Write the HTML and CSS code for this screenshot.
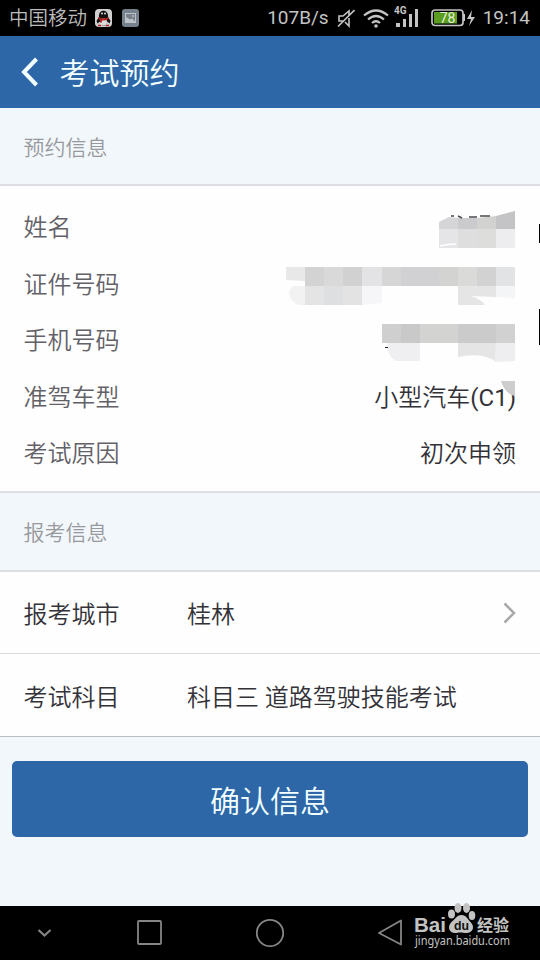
FILE: index.html
```
<!DOCTYPE html>
<html lang="zh-CN">
<head>
  <meta charset="UTF-8">
  <meta name="viewport" content="width=device-width, initial-scale=1.0">
  <title>考试预约</title>
  <link rel="stylesheet" href="styles.css">
</head>
<body>

<div class="status-bar">
  <span class="carrier">中国移动</span>
  <svg class="icon-qq" width="17" height="18" viewBox="0 0 17 18">
    <rect width="17" height="18" rx="4" fill="#d0d0d0"/>
    <path d="M4 8C3-.5 14-.5 13 8l2.500 4-1 2.500-2-2-2 4H7l-2-4-2.500 2-1-2.500z" fill="#141010"/>
    <ellipse cx="8.5" cy="13" rx="3.5" ry="3.5" fill="#ddd"/>
    <path d="M3.5 8q5 3 10 0v2q-5 3-10 0zM5 10h2v3.500H5z" fill="#b92320"/>
    <circle cx="7" cy="4.5" r="1" fill="#ddd"/>
    <circle cx="10" cy="4.5" r="1" fill="#ddd"/>
    <path d="M3 16.500h3M11 16.500h3" stroke="#b92320" stroke-width="1.500"/>
  </svg>
  <svg class="icon-picture" width="17" height="18" viewBox="0 0 17 18">
    <rect width="17" height="18" rx="3" fill="#76818b"/>
    <rect x="3.5" y="4.5" width="10" height="9" fill="none" stroke="#bcc2c7"/>
    <path d="M4 8l4 2.500 2-1 3 3v1H4z" fill="#bcc2c7"/>
    <circle cx="11" cy="7" r="1" fill="#bcc2c7"/>
  </svg>
  <div class="status-right">
    <span class="speed">107B/s</span>
    <svg class="icon-mute" width="18" height="19" viewBox="0 0 18 19" fill="none" stroke="#c4c4c4" stroke-width="1.6">
      <path d="M7 12H2V7h4l6-5v4M12 9v8l-4-4M1 17.500L17.500 1"/>
    </svg>
    <svg class="icon-wifi" width="26" height="19" viewBox="0 0 26 19" fill="none" stroke="#c4c4c4" stroke-width="2.200">
      <path d="M1 6.500q12-10 24 0M5 10.500q8-7 16 0M9 14q4-3.500 8 0"/>
      <circle cx="13" cy="17" r="1.800" fill="#c4c4c4" stroke="none"/>
    </svg>
    <svg class="icon-signal" width="25" height="24" viewBox="0 0 25 24" fill="#c4c4c4">
      <text x="0" y="9" class="net-type">4G</text>
      <rect x="2" y="18" width="4" height="4"/>
      <rect x="9" y="14" width="3" height="8"/>
      <rect x="15" y="9" width="3" height="13"/>
      <rect x="21" y="4" width="3" height="18"/>
    </svg>
    <svg class="icon-battery" width="44" height="18" viewBox="0 0 44 18">
      <rect x="1" y="1" width="31" height="15.500" rx="3" fill="none" stroke="#c4c4c4" stroke-width="1.700"/>
      <rect x="3" y="3" width="23" height="11.500" fill="#5a9d21"/>
      <path d="M33 5v7" stroke="#c4c4c4" stroke-width="2"/>
      <text x="16.500" y="13.500" text-anchor="middle" class="battery-level">78</text>
      <path d="M41 1l-5 9h4l-2 7 6-9h-4z" fill="#c4c4c4"/>
    </svg>
    <span class="clock">19:14</span>
  </div>
</div>

<header class="title-bar">
  <svg class="back" width="18" height="30" viewBox="0 0 18 30">
    <path d="M15.500 2L3 15l12.500 13" fill="none" stroke="#f3ffff" stroke-width="4"/>
  </svg>
  <h1>考试预约</h1>
</header>

<main>
  <h2 class="section-title">预约信息</h2>
  <div class="info">
    <div class="info-row"><span>姓名</span></div>
    <div class="info-row"><span>证件号码</span></div>
    <div class="info-row"><span>手机号码</span></div>
    <div class="info-row"><span>准驾车型</span><b>小型汽车<i>(C1)</i></b></div>
    <div class="info-row"><span>考试原因</span><b>初次申领</b></div>

    <!-- masked personal data -->
    <svg class="mask" width="540" height="305" viewBox="0 186 540 305">
      <path d="M439 222l10-5 9 1v11h-19z" fill="#d5d4d6"/>
      <path d="M458 218h19v11h-19z" fill="#cbcacc"/>
      <path d="M477 218l19-2v13h-19z" fill="#d2d2d1"/>
      <path d="M496 216l19-5v18h-19z" fill="#c4c3c6"/>
      <path d="M439 229h19v19h-19z" fill="#e5e4e6"/>
      <path d="M458 229h19v19h-19z" fill="#dededf"/>
      <path d="M477 229h19v19h-19z" fill="#dddddb"/>
      <path d="M496 229h19v19h-19z" fill="#ededef"/>
      <path d="M440 246q8-2 16-2" stroke="#fff" stroke-width="1.500" fill="none"/>
      <path d="M451 216h3M458 216l4 2M469 217h8M480 216h10" stroke="#4b4950" stroke-width="1.400"/>

      <path d="M286 267h19v14l-19-1z" fill="#e8e8e9"/>
      <path d="M305 267h19v19h-19z" fill="#d3d3d4"/>
      <path d="M324 267h19v19h-19z" fill="#d9d9da"/>
      <path d="M343 267h19v19h-19z" fill="#d1d1d1"/>
      <path d="M362 267h20v19h-20z" fill="#e3e3e5"/>
      <path d="M382 267h19v19h-19z" fill="#d6d6d7"/>
      <path d="M401 267h38v19h-38z" fill="#d1d0d2"/>
      <path d="M439 267h19v19h-19z" fill="#d3d3d1"/>
      <path d="M458 267h19v19h-19z" fill="#dadad9"/>
      <path d="M477 267h19v19h-19z" fill="#d2d2d2"/>
      <path d="M496 267h19v19h-19z" fill="#e2e3e4"/>
      <path d="M305 286v19h-7q-8-4-9-12 0-5 5-7z" fill="#f2f2f3"/>
      <path d="M305 286h19v19h-19z" fill="#e4e4e5"/>
      <path d="M324 286h19v19h-19z" fill="#dedfe0"/>
      <path d="M343 286h19v19h-19z" fill="#e3e3e3"/>
      <path d="M362 286h20v17l-20 2z" fill="#f6f6f8"/>
      <path d="M458 286h38v11l-26-1q10 2 15 9h-27z" fill="#e4e5e4"/>
      <path d="M496 286h19v12l-19-1z" fill="#f4f5f6"/>

      <path d="M382 324h19v19h-19z" fill="#cfcfcf"/>
      <path d="M401 324h19v19h-19z" fill="#c9c9c9"/>
      <path d="M420 324h38v19h-38z" fill="#d3d3d2"/>
      <path d="M458 324h38v19h-38z" fill="#cbcbcb"/>
      <path d="M496 324h19v19h-19z" fill="#d1d1d2"/>
      <path d="M388 343h32v18h-24q-7-4-9-13z" fill="#efeef0"/>
      <path d="M458 343h38v18q-16-9-38-4z" fill="#e5e5e6"/>
      <path d="M496 343h19v18l-21 1z" fill="#eeedef"/>
      <path d="M385 347.500h3" stroke="#222" stroke-width="1"/>
      <path d="M501 381h14v15q-10-2-14-15z" fill="#cdcdce"/>

      <path d="M539 224h1v19h-1zM539 309h1v36h-1z" fill="#000"/>
    </svg>
  </div>

  <h2 class="section-title second">报考信息</h2>
  <div class="choice city">
    <span class="choice-label">报考城市</span>
    <span>桂林</span>
    <svg class="arrow" width="13" height="22" viewBox="0 0 13 22">
      <path d="M1.500 1.500L11 11 1.500 20.500" fill="none" stroke="#a9a9ab" stroke-width="2.500"/>
    </svg>
  </div>
  <div class="choice subject">
    <span class="choice-label">考试科目</span>
    <span>科目三 道路驾驶技能考试</span>
  </div>

  <button class="confirm" type="button">确认信息</button>
</main>

<nav class="nav-bar">
  <svg width="540" height="54" viewBox="0 0 540 54" fill="none" stroke="#858585" stroke-width="1.800">
    <path d="M38.500 24l6 5.500 6-5.500" stroke-width="2.200"/>
    <rect x="138" y="15" width="23" height="23" rx="1"/>
    <circle cx="270" cy="27" r="13.200"/>
    <path d="M401 14.500v24L379 27z" stroke-linejoin="round"/>
  </svg>
</nav>

<svg class="watermark" width="110" height="58" viewBox="0 0 110 58" fill="#c3c3c3">
  <text x="3" y="31" class="wm-brand" textLength="32" lengthAdjust="spacingAndGlyphs">Bai</text>
  <ellipse cx="40.500" cy="13" rx="3.500" ry="4.500"/>
  <ellipse cx="47" cy="7" rx="3.500" ry="5"/>
  <ellipse cx="55.500" cy="7" rx="3.500" ry="5"/>
  <ellipse cx="61" cy="14.500" rx="3.300" ry="4.500"/>
  <path d="M50.500 14c5 0 6 4 9 7 5 5 2 11-4 11-4 0-6-1-10 0-7 1-10-6-5-11 4-3 5-7 10-7z"/>
  <text x="43" y="29" class="wm-du" textLength="15" lengthAdjust="spacingAndGlyphs">du</text>
  <text x="66" y="29.500" class="wm-cn" textLength="32" lengthAdjust="spacingAndGlyphs">经验</text>
  <text x="4" y="43.500" class="wm-url" textLength="95" lengthAdjust="spacingAndGlyphs">jingyan.baidu.com</text>
</svg>

</body>
</html>
```

FILE: styles.css
```
* {
  box-sizing: border-box;
}
body {
  margin: 0;
  width: 540px;
  height: 960px;
  display: flex;
  flex-direction: column;
  position: relative;
  overflow: hidden;
  background: #f2f7fb;
  color: #333238;
  font-family: Roboto, "Noto Sans CJK SC", sans-serif;
  font-weight: 350;
}
svg {
  flex: none;
  display: block;
}
.status-bar {
  height: 36px;
  padding: 0 10px 0 9px;
  display: flex;
  align-items: center;
  background: #000;
  color: #bcbcbc;
  font-size: 19.5px;
  line-height: 36px;
  white-space: nowrap;
}
.carrier {
  padding-top: 2px;
}
.icon-qq {
  margin-left: 8px;
}
.icon-picture {
  margin-left: 10px;
}
.status-right {
  margin-left: auto;
  display: flex;
  align-items: center;
  color: #c4c4c4;
  font-size: 19px;
  font-weight: 400;
}
.icon-mute {
  margin-left: 8px;
}
.icon-wifi {
  margin-left: 8px;
}
.icon-signal {
  margin-left: 5px;
  margin-top: -3px;
}
.icon-battery {
  margin-left: 12px;
}
.clock {
  margin-left: 8px;
}
.net-type {
  font: bold 10px Roboto, sans-serif;
}
.battery-level {
  font: 14px Roboto, sans-serif;
  fill: #e4f0d8;
}
.title-bar {
  height: 72px;
  padding-left: 21px;
  display: flex;
  align-items: center;
  background: #2d67a8;
  color: #f3ffff;
}
.title-bar h1 {
  margin: 0 0 0 20.5px;
  padding-top: 3px;
  font-size: 30px;
  font-weight: 350;
  line-height: 69px;
}
.section-title {
  margin: 0;
  height: 78px;
  padding-left: 23.5px;
  border-bottom: 2px solid #dcdee2;
  color: #98999d;
  font-size: 21px;
  font-weight: 350;
  line-height: 80px;
}
.section-title.second {
  height: 79px;
  line-height: 81px;
}
.info {
  position: relative;
  height: 307px;
  padding: 14px 24px 0 23.5px;
  border-bottom: 2px solid #dcdee2;
  background: #fefefe;
}
.info-row {
  height: 56.5px;
  display: flex;
  justify-content: space-between;
  font-size: 24px;
  line-height: 56.5px;
}
.info-row span {
  color: #626167;
}
.info-row b {
  font-weight: 350;
}
.info-row i {
  font-style: normal;
  font-weight: 400;
}
.mask {
  position: absolute;
  left: 0;
  top: 0;
}
.choice {
  display: flex;
  align-items: center;
  padding: 0 24px 0 23.5px;
  background: #fefefe;
  font-size: 24px;
}
.city {
  height: 82px;
  border-bottom: 1px solid #dcdade;
}
.subject {
  height: 83px;
  border-bottom: 1px solid #babdc4;
}
.choice-label {
  width: 163.5px;
}
.arrow {
  margin-left: auto;
}
.confirm {
  display: block;
  width: 516px;
  height: 76px;
  margin: 24px 12px 0;
  padding: 0;
  border: 0;
  border-radius: 5px;
  background: #2d67a8;
  color: #f3ffff;
  font-family: inherit;
  font-size: 30px;
  font-weight: 350;
}
.nav-bar {
  height: 54px;
  margin-top: auto;
  background: #000;
}
.watermark {
  position: absolute;
  left: 411px;
  top: 901px;
}
.wm-brand {
  font: bold 21px "Liberation Sans", sans-serif;
}
.wm-du {
  font: bold 13px "Liberation Sans", sans-serif;
  fill: #111;
}
.wm-cn {
  font: bold 16px "Noto Sans CJK SC", sans-serif;
}
.wm-url {
  font: 12px "Noto Sans", sans-serif;
}
```
